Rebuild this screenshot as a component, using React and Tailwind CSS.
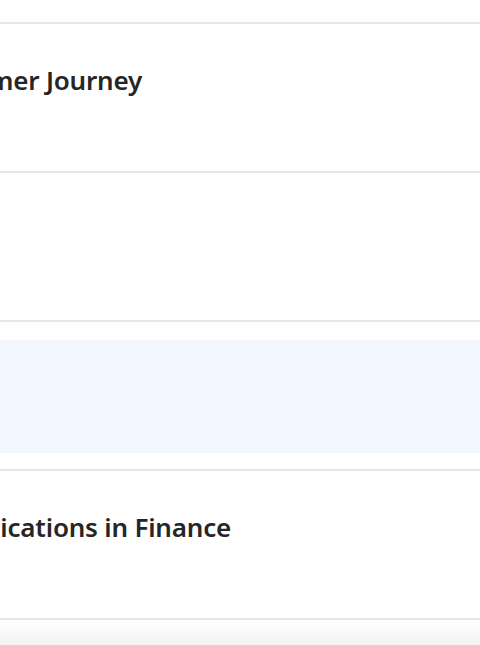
const rows = [
  { title: "Mapping the Customer Journey", width: "w-[142px]" },
  { title: "" },
  { title: "", highlight: true },
  { title: "AI Applications in Finance", width: "w-[231px]" },
];

function Row({ row }) {
  return (
    <div className="flex h-[149px] flex-col border-b-2 border-[#e6e7e9] bg-white">
      {row.title ? (
        <div className={`flex justify-end pt-[38px] ${row.width}`}>
          <h3 className="whitespace-nowrap text-[26px] font-semibold leading-[36px] tracking-[-0.2px] text-[#262626]">
            {row.title}
          </h3>
        </div>
      ) : null}
      {row.highlight ? <div className="mt-[18px] h-[113px] bg-[#f2f6fe]" /> : null}
    </div>
  );
}

export default function App() {
  return (
    <div
      className="h-[645px] w-[480px] overflow-hidden bg-white"
      style={{ fontFamily: '"Noto Sans", "Open Sans", sans-serif' }}
    >
      <div className="h-[24px] border-b-2 border-[#e6e7e9] bg-white" />
      {rows.map((row, i) => (
        <Row key={i} row={row} />
      ))}
      <div className="h-[25px] bg-gradient-to-b from-white to-[#f3f3f4]" />
    </div>
  );
}
